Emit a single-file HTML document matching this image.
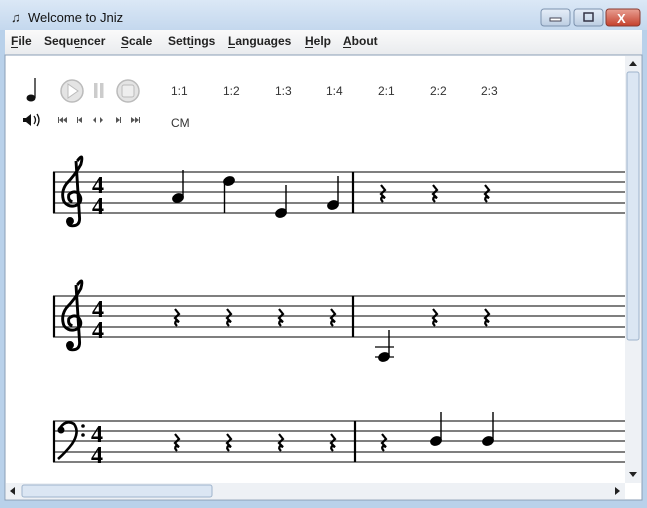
<!DOCTYPE html>
<html><head><style>
body{margin:0;width:647px;height:508px;overflow:hidden;background:#b9d1ea;font-family:"Liberation Sans",sans-serif}
</style></head><body>
<svg width="647" height="508" xmlns="http://www.w3.org/2000/svg" style="position:absolute;left:0;top:0">
<defs>
<linearGradient id="tb" x1="0" y1="0" x2="0" y2="1"><stop offset="0" stop-color="#dbe8f6"/><stop offset="1" stop-color="#c4d8ee"/></linearGradient>
<linearGradient id="mb" x1="0" y1="0" x2="0" y2="1"><stop offset="0" stop-color="#fafafa"/><stop offset="1" stop-color="#e9ebee"/></linearGradient>
<linearGradient id="cl" x1="0" y1="0" x2="0" y2="1"><stop offset="0" stop-color="#e8a093"/><stop offset="1" stop-color="#c5402c"/></linearGradient>
<linearGradient id="bt" x1="0" y1="0" x2="0" y2="1"><stop offset="0" stop-color="#e6eef8"/><stop offset="1" stop-color="#bccde2"/></linearGradient>
<g id="rest"><path d="M-2,-9 L2,-4 L-2,0 L2,4 L-1,3 Q-3,5 0,8" fill="none" stroke="#000" stroke-width="2.2"/></g>
<g id="treble"><path d="M6,-30 Q12,-38 9,-27 Q4,-18 -3,-11 Q-8,-4 -5,4 Q0,10 7,6 Q11,2 7,-3 Q3,-6 -1,-2 Q-2,3 2,4 M5,-30 L8,18 Q8,24 2,24 Q-2,24 -2,20" fill="none" stroke="#000" stroke-width="2.4"/><circle cx="0" cy="20" r="3.3"/></g>
</defs>
<rect x="0" y="0" width="647" height="30" fill="url(#tb)"/>
<text x="11" y="22" font-size="13" fill="#222">♫</text>
<text x="28" y="22" font-size="13" fill="#111" font-family="Liberation Sans">Welcome to Jniz</text>
<rect x="541" y="9" width="29" height="17" rx="3" fill="url(#bt)" stroke="#7c92ae"/>
<rect x="550" y="18" width="11" height="3" fill="#fff" stroke="#445"/>
<rect x="574" y="9" width="29" height="17" rx="3" fill="url(#bt)" stroke="#7c92ae"/>
<rect x="584" y="13" width="9" height="8" fill="none" stroke="#334" stroke-width="1.5"/>
<rect x="606" y="9" width="34" height="17" rx="3" fill="url(#cl)" stroke="#8a3a30"/>
<text x="617" y="23" font-size="13" font-weight="bold" fill="#fff">X</text>
<rect x="5" y="30" width="637" height="25" fill="url(#mb)"/>
<g font-size="12" font-weight="bold" fill="#222" font-family="Liberation Sans">
<text x="11" y="45">File</text><text x="44" y="45">Sequencer</text><text x="121" y="45">Scale</text><text x="168" y="45">Settings</text><text x="228" y="45">Languages</text><text x="305" y="45">Help</text><text x="343" y="45">About</text>
</g>
<g stroke="#222" stroke-width="1">
<line x1="11" y1="47.5" x2="18" y2="47.5"/><line x1="75" y1="47.5" x2="82" y2="47.5"/><line x1="121" y1="47.5" x2="128" y2="47.5"/><line x1="189" y1="47.5" x2="193" y2="47.5"/><line x1="228" y1="47.5" x2="235" y2="47.5"/><line x1="305" y1="47.5" x2="313" y2="47.5"/><line x1="343" y1="47.5" x2="351" y2="47.5"/>
</g>
<rect x="5" y="55" width="637" height="445" fill="#fff" stroke="#8a9eb6"/>
<rect x="625" y="56" width="16" height="427" fill="#eef1f5"/>
<rect x="627" y="72" width="12" height="268" fill="#dbe6f3" stroke="#9fb4cc" rx="2"/>
<path d="M629,66 L633,61 L637,66Z" fill="#222"/><path d="M629,472 L633,477 L637,472Z" fill="#222"/>
<rect x="6" y="483" width="619" height="16" fill="#eef1f5"/>
<rect x="22" y="485" width="190" height="12" fill="#dbe6f3" stroke="#9fb4cc" rx="2"/>
<path d="M15,487 L10,491 L15,495Z" fill="#222"/><path d="M615,487 L620,491 L615,495Z" fill="#222"/>
<!-- toolbar -->
<ellipse cx="31" cy="98" rx="4.5" ry="3.5" fill="#111"/><line x1="35" y1="98" x2="35" y2="78" stroke="#111" stroke-width="1.3"/>
<circle cx="72" cy="91" r="11" fill="#e4e4e4" stroke="#bbb" stroke-width="1.5"/><path d="M68,84 L78,91 L68,98Z" fill="#fff" stroke="#bbb"/>
<rect x="94" y="83" width="3.5" height="15" fill="#ccc"/><rect x="100" y="83" width="3.5" height="15" fill="#ccc"/>
<circle cx="128" cy="91" r="11" fill="#e4e4e4" stroke="#bbb" stroke-width="1.5"/><rect x="122" y="85" width="12" height="12" rx="2" fill="#eee" stroke="#bbb"/>
<g font-size="12" fill="#333"><text x="171" y="95">1:1</text><text x="223" y="95">1:2</text><text x="275" y="95">1:3</text><text x="326" y="95">1:4</text><text x="378" y="95">2:1</text><text x="430" y="95">2:2</text><text x="481" y="95">2:3</text><text x="171" y="127">CM</text></g>
<path d="M23,118 L26,118 L31,114 L31,126 L26,122 L23,122Z" fill="#111"/><path d="M34,116 Q37,120 34,124 M37,114 Q41,120 37,126" fill="none" stroke="#111" stroke-width="1.3"/>
<g fill="#555">
<path d="M58,117 h1v6h-1z M63,117 l-4,3 l4,3z M67,117 l-4,3 l4,3z"/>
<path d="M77,117 h1v6h-1z M82,117 l-4,3 l4,3z"/>
<path d="M96,117 l-3,3 l3,3z M100,117 l3,3 l-3,3z"/>
<path d="M116,117 l4,3 l-4,3z M120,117 h1v6h-1z"/>
<path d="M131,117 l4,3 l-4,3z M135,117 l4,3 l-4,3z M139,117 h1v6h-1z"/>
</g>
<!-- staves -->
<g stroke="#333" stroke-width="1.3">
<line x1="53" y1="172" x2="625" y2="172"/><line x1="53" y1="182" x2="625" y2="182"/><line x1="53" y1="192" x2="625" y2="192"/><line x1="53" y1="203" x2="625" y2="203"/><line x1="53" y1="213" x2="625" y2="213"/>
<line x1="53" y1="296" x2="625" y2="296"/><line x1="53" y1="306" x2="625" y2="306"/><line x1="53" y1="316" x2="625" y2="316"/><line x1="53" y1="327" x2="625" y2="327"/><line x1="53" y1="337" x2="625" y2="337"/>
<line x1="53" y1="421" x2="625" y2="421"/><line x1="53" y1="431" x2="625" y2="431"/><line x1="53" y1="441" x2="625" y2="441"/><line x1="53" y1="452" x2="625" y2="452"/><line x1="53" y1="462" x2="625" y2="462"/>
</g>
<g stroke="#000" stroke-width="2.2">
<line x1="54" y1="172" x2="54" y2="213"/><line x1="353" y1="172" x2="353" y2="213"/>
<line x1="54" y1="296" x2="54" y2="337"/><line x1="353" y1="296" x2="353" y2="337"/>
<line x1="54" y1="421" x2="54" y2="462"/><line x1="355" y1="421" x2="355" y2="462"/>
</g>
<use href="#treble" transform="translate(70,197) scale(1.2)"/><use href="#treble" transform="translate(70,321) scale(1.2)"/>
<path d="M60,428 Q66,419 74,424 Q80,432 72,444 Q66,452 58,459" fill="none" stroke="#000" stroke-width="2.6"/><circle cx="61" cy="430" r="3.5"/><circle cx="83" cy="426" r="1.8"/><circle cx="83" cy="435" r="1.8"/>
<g font-family="Liberation Serif" font-weight="bold" font-size="24" fill="#000">
<text x="92" y="193">4</text><text x="92" y="214">4</text>
<text x="92" y="317">4</text><text x="92" y="338">4</text>
<text x="91" y="442">4</text><text x="91" y="463">4</text>
</g>
<!-- notes -->
<g fill="#000" stroke="#000">
<ellipse cx="178" cy="198" rx="5.5" ry="4.2" transform="rotate(-20 178 198)"/><line x1="183" y1="197" x2="183" y2="170" stroke-width="1.4"/>
<ellipse cx="229" cy="181" rx="5.5" ry="4.2" transform="rotate(-20 229 181)"/><line x1="224.5" y1="182" x2="224.5" y2="213" stroke-width="1.4"/>
<ellipse cx="281" cy="213" rx="5.5" ry="4.2" transform="rotate(-20 281 213)"/><line x1="286" y1="212" x2="286" y2="185" stroke-width="1.4"/>
<ellipse cx="333" cy="205" rx="5.5" ry="4.2" transform="rotate(-20 333 205)"/><line x1="338" y1="204" x2="338" y2="176" stroke-width="1.4"/>
<ellipse cx="384" cy="357" rx="5.5" ry="4.2" transform="rotate(-20 384 357)"/><line x1="389" y1="356" x2="389" y2="330" stroke-width="1.4"/>
<line x1="375" y1="347" x2="394" y2="347" stroke-width="1.2"/><line x1="375" y1="357" x2="394" y2="357" stroke-width="1.2"/>
<ellipse cx="436" cy="441" rx="5.5" ry="4.2" transform="rotate(-20 436 441)"/><line x1="441" y1="440" x2="441" y2="412" stroke-width="1.4"/>
<ellipse cx="488" cy="441" rx="5.5" ry="4.2" transform="rotate(-20 488 441)"/><line x1="493" y1="440" x2="493" y2="412" stroke-width="1.4"/>
</g>
<use href="#rest" x="383" y="194"/><use href="#rest" x="435" y="194"/><use href="#rest" x="487" y="194"/>
<use href="#rest" x="177" y="318"/><use href="#rest" x="229" y="318"/><use href="#rest" x="281" y="318"/><use href="#rest" x="333" y="318"/><use href="#rest" x="435" y="318"/><use href="#rest" x="487" y="318"/>
<use href="#rest" x="177" y="443"/><use href="#rest" x="229" y="443"/><use href="#rest" x="281" y="443"/><use href="#rest" x="333" y="443"/><use href="#rest" x="384" y="443"/>
</svg>
</body></html>
